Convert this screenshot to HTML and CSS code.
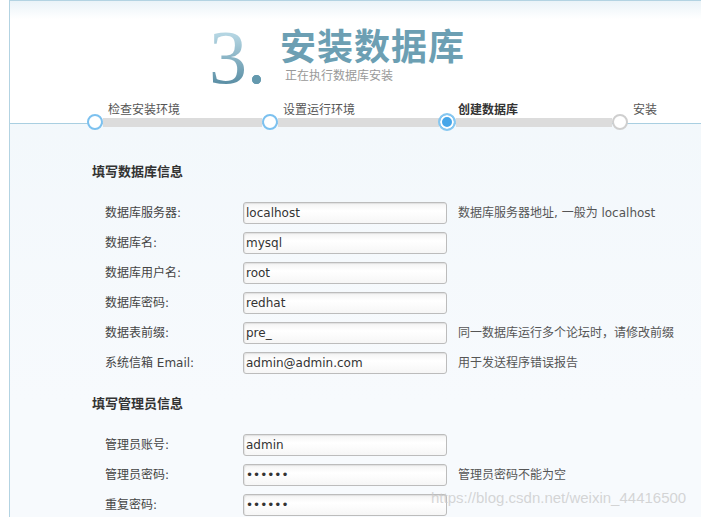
FILE: index.html
```html
<!DOCTYPE html>
<html lang="zh-CN">

<head>
    <meta charset="UTF-8">
    <meta name="viewport" content="width=device-width, initial-scale=1.0">
    <title>安装数据库</title>
    <link rel="stylesheet" href="styles.css">
</head>

<body>
    <div class="page">
        <div class="header">
            <div class="title">
                <span class="num">3<span class="num-dot">.</span></span>
                <div class="title-text">
                    <h1>安装数据库</h1>
                    <p>正在执行数据库安装</p>
                </div>
            </div>

            <ul class="steps">
                <li class="done">
                    <span class="step-label">检查安装环境</span>
                    <span class="track"><i class="node"></i><b class="bar"></b></span>
                </li>
                <li class="done">
                    <span class="step-label">设置运行环境</span>
                    <span class="track"><i class="node"></i><b class="bar"></b></span>
                </li>
                <li class="current">
                    <span class="step-label">创建数据库</span>
                    <span class="track"><i class="node"></i><b class="bar"></b></span>
                </li>
                <li>
                    <span class="step-label">安装</span>
                    <span class="track"><i class="node"></i></span>
                </li>
            </ul>
        </div>

        <form class="form">
            <h3>填写数据库信息</h3>
            <div class="rows">
                <label>数据库服务器:</label>
                <input type="text" value="localhost">
                <span class="hint">数据库服务器地址, 一般为 localhost</span>

                <label>数据库名:</label>
                <input type="text" value="mysql">
                <span class="hint"></span>

                <label>数据库用户名:</label>
                <input type="text" value="root">
                <span class="hint"></span>

                <label>数据库密码:</label>
                <input type="text" value="redhat">
                <span class="hint"></span>

                <label>数据表前缀:</label>
                <input type="text" value="pre_">
                <span class="hint">同一数据库运行多个论坛时，请修改前缀</span>

                <label>系统信箱 Email:</label>
                <input type="text" value="admin@admin.com">
                <span class="hint">用于发送程序错误报告</span>
            </div>

            <h3>填写管理员信息</h3>
            <div class="rows">
                <label>管理员账号:</label>
                <input type="text" value="admin">
                <span class="hint"></span>

                <label>管理员密码:</label>
                <input type="password" value="123456">
                <span class="hint">管理员密码不能为空</span>

                <label>重复密码:</label>
                <input type="password" value="123456">
                <span class="hint"></span>
            </div>
        </form>

        <div class="watermark">https://blog.csdn.net/weixin_44416500</div>
    </div>
</body>

</html>
```

FILE: styles.css
```css
/* Pagina de instalacao */
* {
    box-sizing: border-box;
    margin: 0;
    padding: 0;
}

html,
body {
    height: 100%;
    overflow: hidden;
}

body {
    background-color: #fff;
    font-family: "DejaVu Sans", "Noto Sans CJK SC", sans-serif;
    font-size: 12px;
    color: #444;
}

.page {
    position: relative;
    margin-left: 9px;
    min-height: 100%;
    border-left: 1px solid #b3d3e2;
    border-top: 1px solid #b3d3e2;
    background: linear-gradient(to bottom, #f1f7fb, #f7fafd 400px);
}

/* Cabecalho */
.header {
    height: 123px;
    background: linear-gradient(to bottom, #eaf3f8, #fff 18px);
    border-bottom: 1px solid #a9cfe1;
}

.title {
    display: flex;
    align-items: flex-start;
    padding-top: 24px;
    padding-left: 199px;
}

.num {
    margin-top: -5px;
    font-family: "Liberation Serif", serif;
    font-size: 76px;
    line-height: 75px;
    background: linear-gradient(to bottom, #b4d5e2 20%, #5b8fa5 85%);
    -webkit-background-clip: text;
    background-clip: text;
    color: transparent;
}

.num-dot {
    color: #6499ae;
}

.title-text {
    margin-left: 14px;
}

.title-text h1 {
    font-family: "Noto Sans CJK SC", sans-serif;
    font-size: 36px;
    line-height: 38px;
    letter-spacing: 1px;
    font-weight: bold;
    color: #6c9fb3;
}

.title-text p {
    margin-top: 5px;
    padding-left: 5px;
    font-size: 12px;
    line-height: 16px;
    color: #999;
}

/* Etapas */
.steps {
    position: relative;
    z-index: 1;
    display: grid;
    grid-template-columns: 175px 177px 173px 90px;
    margin-top: 8px;
    margin-left: 77px;
    list-style: none;
}

.steps li {
    display: flex;
    flex-direction: column;
}

.step-label {
    padding-left: 21px;
    line-height: 14px;
    margin-bottom: -3px;
    color: #555;
}

.steps .current .step-label {
    font-weight: bold;
    color: #333;
    padding-left: 19px;
}

.track {
    display: flex;
    align-items: center;
    height: 16px;
}

.node {
    flex: none;
    width: 16px;
    height: 16px;
    border-radius: 50%;
    border: 2px solid #cfcfcf;
    background-color: #fff;
}

.done .node {
    border-color: #7cc1ef;
}

.current .node {
    width: 18px;
    height: 18px;
    margin-left: -1px;
    border: 2px solid #86c7f0;
    background-color: #46a6e9;
    box-shadow: inset 0 0 0 2px #fff;
}

.bar {
    flex: 1;
    height: 9px;
    background-color: #dcdcdc;
}

/* Formulario */
.form {
    padding: 38px 0 0 82px;
}

.form h3 {
    font-size: 13px;
    line-height: 20px;
    font-weight: bold;
    color: #333;
    margin-bottom: 20px;
}

.rows + h3 {
    margin-top: 20px;
}

.rows {
    display: grid;
    grid-template-columns: 127px 204px auto;
    grid-auto-rows: 22px;
    row-gap: 8px;
    column-gap: 11px;
    align-items: center;
    margin-left: 13px;
}

.rows label {
    color: #444;
    line-height: 16px;
}

.rows input {
    height: 22px;
    width: 204px;
    padding: 0 2px;
    border: 1px solid #bcbcbc;
    border-radius: 3px;
    background: linear-gradient(to bottom, #f3f3f3, #fff 40%, #f6f6f6);
    box-shadow: inset 1px 1px 1px rgba(0, 0, 0, 0.08);
    font-family: "DejaVu Sans", "Noto Sans CJK SC", sans-serif;
    font-size: 12px;
    color: #333;
    outline: none;
}

.hint {
    color: #555;
    line-height: 16px;
    white-space: nowrap;
}

.watermark {
    position: absolute;
    left: 421px;
    top: 488px;
    font-family: "Liberation Sans", sans-serif;
    font-size: 15px;
    color: rgba(200, 200, 200, 0.75);
    white-space: nowrap;
}
```
